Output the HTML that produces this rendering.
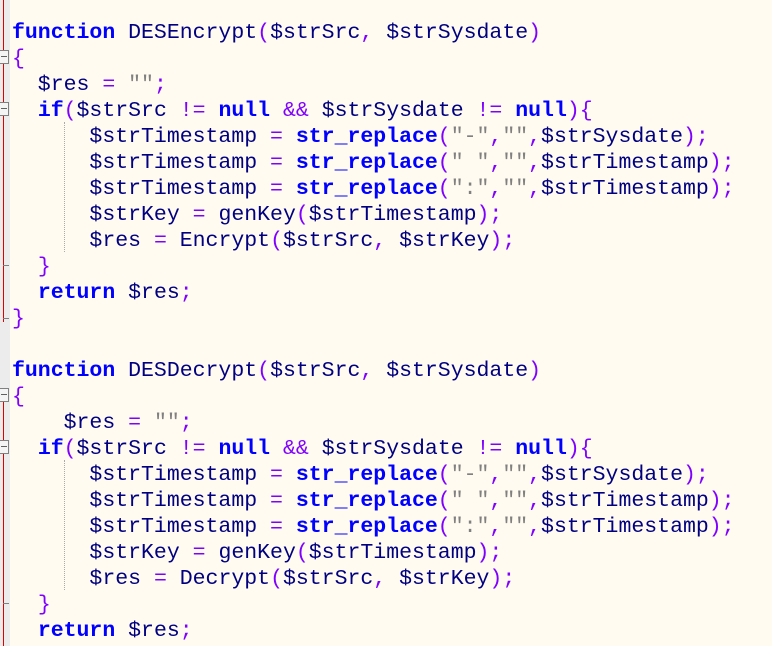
<!DOCTYPE html>
<html><head><meta charset="utf-8"><style>
body{margin:0;width:772px;height:646px;overflow:hidden;background:#fffbf0;position:relative}
#m{position:absolute;left:0;top:0;width:10px;height:646px;background:#ececec}
.red{position:absolute;left:3px;width:1px;background:#e00000}
.box{position:absolute;left:-1px;width:8px;height:12px;border:1px solid #808080;background:#f4f4f4}
.box:after{content:"";position:absolute;left:1px;right:1px;top:5px;height:1px;background:#606060}
.tick{position:absolute;left:3px;width:6px;height:1px;background:#808080}
pre{position:absolute;left:12px;top:20px;margin:0;font:21.5px/26px "Liberation Mono",monospace;color:#000080}
.k{color:#0000ff;font-weight:bold}
.o{color:#8000ff}
.s{color:#808080}
.g{position:absolute;left:64px;width:0;border-left:1px dotted #aaa}
</style></head><body>
<div id="m"></div>
<div class="red" style="top:0;height:322px"></div>
<div class="red" style="top:392px;height:254px"></div>
<div class="box" style="top:50px"></div>
<div class="box" style="top:102px"></div>
<div class="tick" style="top:265px"></div>
<div class="tick" style="top:318px"></div>
<div class="box" style="top:388px"></div>
<div class="box" style="top:440px"></div>
<div class="tick" style="top:603px"></div>
<div class="g" style="top:122px;height:130px"></div>
<div class="g" style="top:460px;height:130px"></div>
<pre><span class="k">function</span> DESEncrypt<span class="o">(</span>$strSrc<span class="o">,</span> $strSysdate<span class="o">)</span>
<span class="o">{</span>
  $res <span class="o">=</span> <span class="s">""</span><span class="o">;</span>
  <span class="k">if</span><span class="o">(</span>$strSrc <span class="o">!=</span> <span class="k">null</span> <span class="o">&amp;&amp;</span> $strSysdate <span class="o">!=</span> <span class="k">null</span><span class="o">){</span>
      $strTimestamp <span class="o">=</span> <span class="k">str_replace</span><span class="o">(</span><span class="s">"-"</span><span class="o">,</span><span class="s">""</span><span class="o">,</span>$strSysdate<span class="o">);</span>
      $strTimestamp <span class="o">=</span> <span class="k">str_replace</span><span class="o">(</span><span class="s">" "</span><span class="o">,</span><span class="s">""</span><span class="o">,</span>$strTimestamp<span class="o">);</span>
      $strTimestamp <span class="o">=</span> <span class="k">str_replace</span><span class="o">(</span><span class="s">":"</span><span class="o">,</span><span class="s">""</span><span class="o">,</span>$strTimestamp<span class="o">);</span>
      $strKey <span class="o">=</span> genKey<span class="o">(</span>$strTimestamp<span class="o">);</span>
      $res <span class="o">=</span> Encrypt<span class="o">(</span>$strSrc<span class="o">,</span> $strKey<span class="o">);</span>
  <span class="o">}</span>
  <span class="k">return</span> $res<span class="o">;</span>
<span class="o">}</span>

<span class="k">function</span> DESDecrypt<span class="o">(</span>$strSrc<span class="o">,</span> $strSysdate<span class="o">)</span>
<span class="o">{</span>
    $res <span class="o">=</span> <span class="s">""</span><span class="o">;</span>
  <span class="k">if</span><span class="o">(</span>$strSrc <span class="o">!=</span> <span class="k">null</span> <span class="o">&amp;&amp;</span> $strSysdate <span class="o">!=</span> <span class="k">null</span><span class="o">){</span>
      $strTimestamp <span class="o">=</span> <span class="k">str_replace</span><span class="o">(</span><span class="s">"-"</span><span class="o">,</span><span class="s">""</span><span class="o">,</span>$strSysdate<span class="o">);</span>
      $strTimestamp <span class="o">=</span> <span class="k">str_replace</span><span class="o">(</span><span class="s">" "</span><span class="o">,</span><span class="s">""</span><span class="o">,</span>$strTimestamp<span class="o">);</span>
      $strTimestamp <span class="o">=</span> <span class="k">str_replace</span><span class="o">(</span><span class="s">":"</span><span class="o">,</span><span class="s">""</span><span class="o">,</span>$strTimestamp<span class="o">);</span>
      $strKey <span class="o">=</span> genKey<span class="o">(</span>$strTimestamp<span class="o">);</span>
      $res <span class="o">=</span> Decrypt<span class="o">(</span>$strSrc<span class="o">,</span> $strKey<span class="o">);</span>
  <span class="o">}</span>
  <span class="k">return</span> $res<span class="o">;</span></pre>
</body></html>
